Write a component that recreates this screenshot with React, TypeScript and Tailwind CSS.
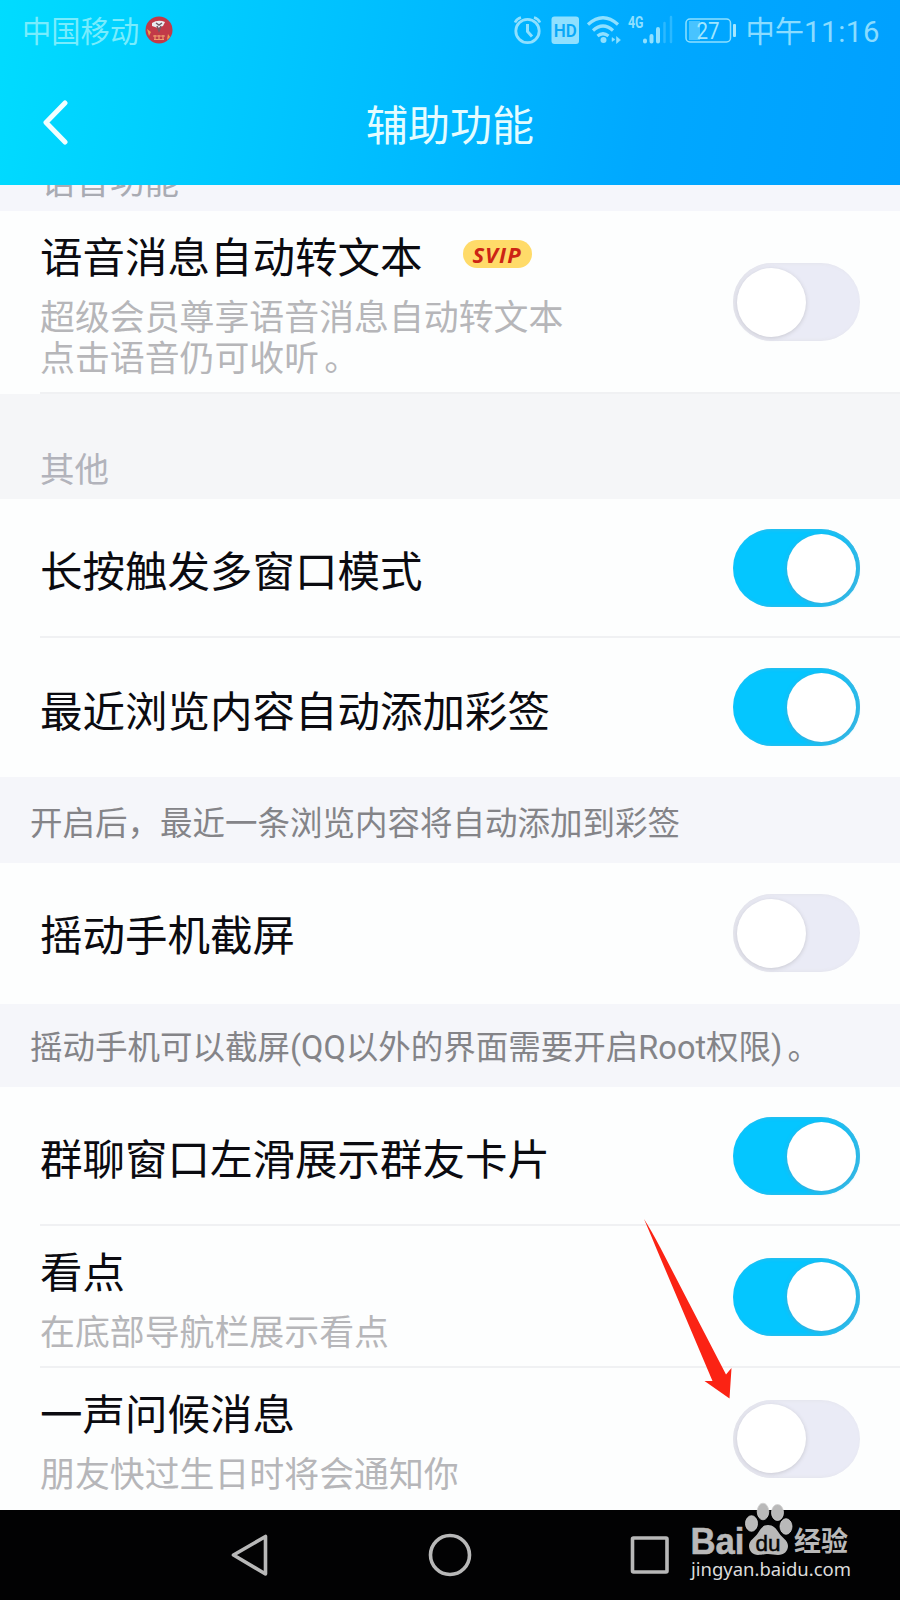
import React from 'react';

function Toggle({ on }: { on: boolean }) {
  return (
    <span
      className={
        'mt-px flex h-[78px] w-[127px] shrink-0 items-center rounded-full px-[4px] ' +
        (on ? 'justify-end bg-[#04c6ff] shadow-[inset_-2px_0_4px_#4ab4dc]' : 'justify-start bg-[#eaebf6] shadow-[inset_2px_0_4px_#e2e2e8]')
      }
    >
      <span className={'h-[69px] w-[69px] rounded-full bg-white ' + (on ? 'shadow-[0_1px_4px_#4aa8d0]' : 'shadow-[0_1px_4px_#c8c8d0]')} />
    </span>
  );
}

function Label({ children }: { children: React.ReactNode }) {
  return <div className="whitespace-nowrap text-[42.5px] leading-[60px] text-[#0b0b10]">{children}</div>;
}

function Desc({ children }: { children: React.ReactNode }) {
  return <div className="mt-[9px] whitespace-nowrap text-[34.9px] leading-[41px] text-[#b6b6b9]">{children}</div>;
}

function Row({ height, on, line, pad, children }: { height: string; on: boolean; line?: boolean; pad: string; children: React.ReactNode }) {
  return (
    <div className={'bg-[#fdfefe] pl-[40px] ' + height}>
      <div className={'flex h-full items-center justify-between border-b-2 pr-[40px] ' + (line ? 'border-[#f0f1f3]' : 'border-transparent')}>
        <div className={pad}>{children}</div>
        <Toggle on={on} />
      </div>
    </div>
  );
}

function Note({ height, children }: { height: string; children: React.ReactNode }) {
  return (
    <div className={'flex items-center whitespace-nowrap bg-[#f5f6fa] pl-[30px] text-[32.5px] text-[#848488] ' + height}>
      {children}
    </div>
  );
}

function StatusIcons() {
  return (
    <svg className="h-[60px] w-[215px]" viewBox="509 0 215 60" fill="none" stroke="#8fe0ff">
      <circle cx="528.5" cy="31" r="11.7" strokeWidth="2.8" />
      <path d="M528.5 24v7.500l4.500 5" strokeWidth="3" />
      <path d="M516 22.5q2-4 6-5M541 22.5q-2-4-6-5" strokeWidth="2.6" />
      <rect x="552.5" y="16.5" width="27.5" height="27.5" rx="3" fill="#8fe0ff" stroke="none" />
      <text x="566.3" y="37" textAnchor="middle" fontSize="18" fontWeight="600" fontFamily="Roboto" fill="#08a8f8" stroke="none" textLength="23" lengthAdjust="spacingAndGlyphs">HD</text>
      <path d="M589 24.5q15-13.500 30 0M594 30.500q10-9 20 0M598.500 36q5.500-4.500 11 0" strokeWidth="3.200" />
      <circle cx="604.500" cy="40" r="3" fill="#8fe0ff" stroke="none" />
      <path d="M613 37.500l3 2-3 2zM617.500 36.500v7l4-3.500z" fill="#8fe0ff" strokeWidth="0.500" />
      <text x="629" y="28" fontSize="16" fontWeight="700" fontFamily="Roboto" fill="#8fe0ff" stroke="none" textLength="15.500" lengthAdjust="spacingAndGlyphs">4G</text>
      <g strokeWidth="4" strokeLinecap="round">
        <path d="M646 40.500v1M652.500 36v5.500M659 29v12.500" />
        <path d="M665.500 23v19M672 17v25" strokeWidth="2.500" opacity="0.300" />
      </g>
    </svg>
  );
}

function Battery() {
  return (
    <svg className="h-[60px] w-[52px]" viewBox="685 0 52 60">
      <rect x="690" y="21" width="11" height="19" fill="#8fe0ff" opacity="0.5" />
      <rect x="687" y="19" width="44.500" height="23" rx="4" fill="none" stroke="#8fe0ff" strokeWidth="1.500" />
      <rect x="734" y="24" width="3" height="13" rx="1" fill="#a5e7ff" />
      <text x="709" y="38.500" textAnchor="middle" fontSize="24" fontFamily="Roboto" fill="#a0e6ff" textLength="23" lengthAdjust="spacingAndGlyphs">27</text>
    </svg>
  );
}

function Watermark() {
  return (
    <svg className="absolute left-[684px] top-[-10px] h-[90px] w-[180px]" viewBox="684 1500 180 90" fill="#b9b9b9">
      <text x="690.500" y="1553.500" fontSize="36" fontWeight="700" fontFamily="Liberation Sans" stroke="#b9b9b9" strokeWidth="0.600" textLength="54" lengthAdjust="spacingAndGlyphs">Bai</text>
      <g stroke="#cfcfcf" strokeWidth="0.800">
        <ellipse cx="751.500" cy="1523.500" rx="6" ry="7.800" />
        <ellipse cx="763" cy="1511.500" rx="5.800" ry="8.300" />
        <ellipse cx="777.500" cy="1512.500" rx="6" ry="8" />
        <ellipse cx="786" cy="1526.500" rx="6" ry="7.800" />
      </g>
      <path d="M768 1525c-5 0-7 3-10 8s-9 7-9 13c0 5 4 9 9 9 4 0 6-1 10-1s6 1 10 1c6 0 10-4 10-9 0-6-6-8-9-13s-6-8-11-8z" />
      <text x="768" y="1550.500" textAnchor="middle" fontSize="22" fontFamily="Liberation Sans" fill="#050505" stroke="#050505" strokeWidth="0.500" textLength="25" lengthAdjust="spacingAndGlyphs">du</text>
      <text x="794" y="1551" fontSize="27" fontWeight="700" fontFamily="Noto Sans CJK SC" textLength="54" lengthAdjust="spacingAndGlyphs">经验</text>
      <text x="691" y="1575.500" fontSize="18" fontFamily="Noto Sans" fill="#dcdcdc" textLength="160" lengthAdjust="spacingAndGlyphs">jingyan.baidu.com</text>
    </svg>
  );
}

export default function App() {
  return (
    <div className="relative flex h-[1600px] w-[900px] flex-col overflow-hidden bg-[#fdfefe] font-['Roboto','Noto_Sans_CJK_SC',sans-serif]">
      <header className="h-[185px] shrink-0 bg-[linear-gradient(100deg,#00dcff_0%,#00c3ff_35%,#00a8ff_72%,#00a0ff_100%)]">
        <div className="flex h-[60px] items-center pl-[22px] pr-[20px] text-[29.300px] text-[#86e6ff]">
          <span className="whitespace-nowrap pt-[6px] text-[#78ecfd]">中国移动</span>
          <svg className="ml-[6px] h-[28px] w-[28px]" viewBox="0 0 28 28">
            <circle cx="14" cy="14" r="13.500" fill="#c23a48" />
            <path d="M7 7q6-4 13-1l-2 4-5 2-6-2z" fill="#e9eef0" />
            <path d="M11 7l3 2 3-2M12 10l2 5 2-5" stroke="#735a66" strokeWidth="1.500" fill="none" />
            <path d="M2 13l4 3-2 4zM23 18l2 3-3 3z" fill="#eba052" />
            <path d="M8 20h12M9 23.500h10M10 19v5M14 19v5M18 19v5" stroke="#ef9d6d" strokeWidth="1.200" />
          </svg>
          <div className="ml-auto flex items-center text-[#8adcff]">
            <div className="w-[176px] overflow-hidden"><StatusIcons /></div>
            <Battery />
            <span className="ml-[9px] whitespace-nowrap pt-[6px]">中午<span className="tracking-[0.6px]">11:16</span></span>
          </div>
        </div>
        <div className="flex h-[125px] items-center pl-[42px]">
          <svg className="h-[46px] w-[26px]" viewBox="0 0 26 46" fill="none" stroke="#f1feff" strokeWidth="5" strokeLinecap="round" strokeLinejoin="round">
            <path d="M23 3L4 22.500L23 42" />
          </svg>
          <h1 className="w-[764px] pt-[7px] text-center text-[42px] font-normal text-[#e4fcff]">辅助功能</h1>
        </div>
      </header>

      <div className="h-[26px] shrink-0 overflow-hidden bg-[#f5f6fb]">
        <div className="mt-[-24px] pl-[41px] text-[34.5px] leading-[42px] text-[#a9abb3]">语音功能</div>
      </div>

      <Row height="h-[183px]" on={false} line pad="pt-[6px]">
        <div className="flex items-center">
          <Label>语音消息自动转文本</Label>
          <span className="mb-[10px] ml-[40px] flex h-[28px] w-[69px] items-center justify-center rounded-full bg-[#ffdb69] font-['Open_Sans'] text-[22px] font-bold italic tracking-[1px] text-[#cc2414]">SVIP</span>
        </div>
        <Desc>超级会员尊享语音消息自动转文本<br />点击语音仍可收听<span className="ml-[5px]">。</span></Desc>
      </Row>
      <div className="h-[105px] shrink-0 bg-[#f5f6f8] pl-[40px] pt-[51px] text-[34.5px] leading-[50px] text-[#b2b3bb]">其他</div>
      <Row height="h-[139px]" on line pad="pt-[10px]"><Label>长按触发多窗口模式</Label></Row>
      <Row height="h-[139px]" on pad="pt-[12px]"><Label>最近浏览内容自动添加彩签</Label></Row>
      <Note height="h-[86px] pt-[9px]">开启后，最近一条浏览内容将自动添加到彩签</Note>
      <Row height="h-[141px]" on={false} pad="pt-[9px]"><Label>摇动手机截屏</Label></Row>
      <Note height="h-[83px] pt-[5px]">摇动手机可以截屏(QQ以外的界面需要开启Root权限)<span className="ml-[5px]">。</span></Note>
      <Row height="h-[139px]" on line pad="pt-[10px]"><Label>群聊窗口左滑展示群友卡片</Label></Row>
      <Row height="h-[142px]" on line pad="pt-[6px]"><Label>看点</Label><Desc>在底部导航栏展示看点</Desc></Row>
      <Row height="h-[142px]" on={false} pad="pt-[6px]"><Label>一声问候消息</Label><Desc>朋友快过生日时将会通知你</Desc></Row>

      <nav className="relative h-[90px] shrink-0 bg-[#020203]">
        <svg className="h-[90px] w-[680px]" viewBox="0 0 680 90" fill="none" stroke="#b8b8b8" strokeWidth="3.600" strokeLinejoin="round">
          <path d="M233.500 45L265.500 26.500V64z" />
          <circle cx="450" cy="45" r="19.500" />
          <rect x="632.500" y="28" width="34.500" height="34" rx="1" />
        </svg>
        <Watermark />
      </nav>

      <svg className="absolute left-[640px] top-[1215px] h-[190px] w-[100px]" viewBox="640 1215 100 190">
        <path d="M644 1219Q651 1230 660 1247L726 1374.500L731.500 1368L729.500 1398.500L704.500 1381L712.500 1381L657 1250Q650 1233 644 1219z" fill="#fb2314" />
      </svg>
    </div>
  );
}
